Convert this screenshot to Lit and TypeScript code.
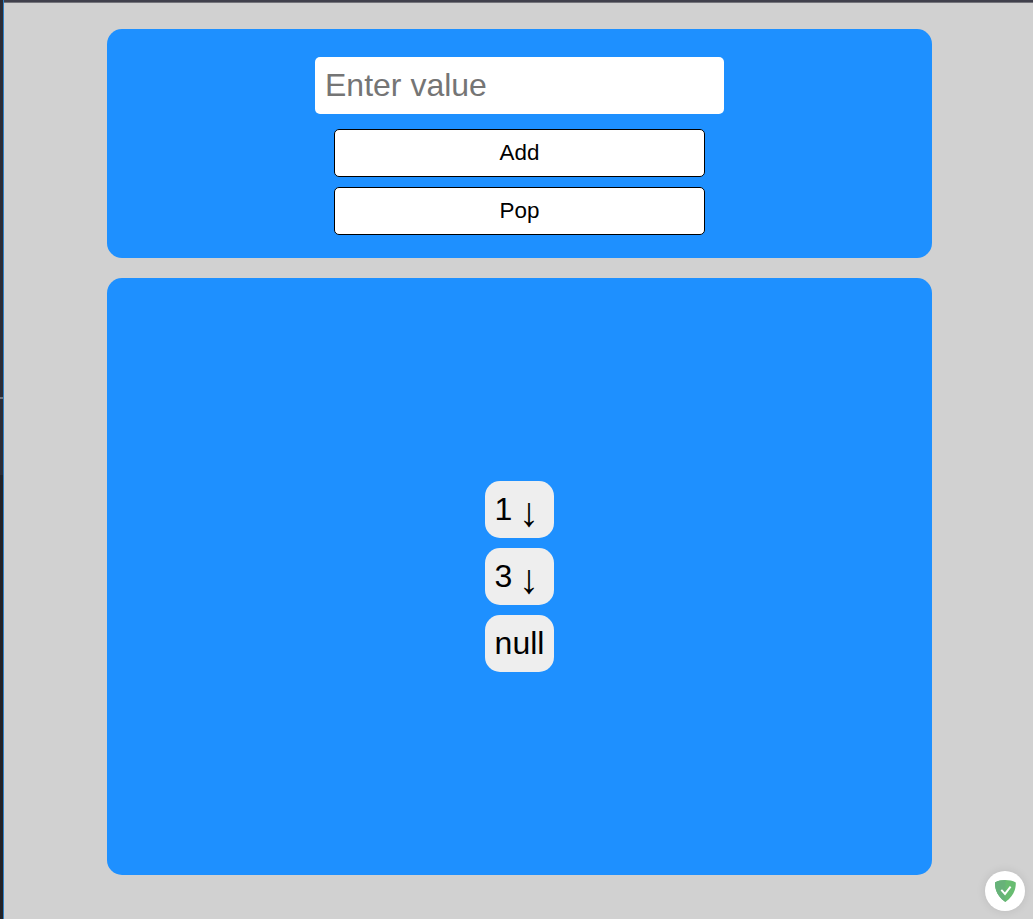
import { LitElement, html, css } from "lit";
import { customElement, state } from "lit/decorators.js";

@customElement("app-root")
export class AppRoot extends LitElement {
  static styles = css`
    :host {
      display: block;
      font-family: "Liberation Sans", Arial, sans-serif;
      color: #000;
    }
    *, *::before { box-sizing: border-box; }
    .window {
      display: grid;
      grid-template-columns: 4px 1fr;
      grid-template-rows: 3px 1fr;
      height: 919px;
      background: #d1d1d1;
      overflow: hidden;
    }
    .top {
      grid-column: 2;
      background: #40404c;
      border-bottom: 1px solid #74747b;
    }
    .side {
      grid-column: 1;
      grid-row: 1 / 3;
      display: flex;
      flex-direction: column;
      background: linear-gradient(#2b2c36 0 475px, #222227 475px);
      border-right: 1px solid #2f7fc4;
      padding-top: 397px;
    }
    .tick { height: 2px; background: #74747b; }
    .page {
      grid-column: 2;
      display: flex;
      flex-direction: column;
      gap: 20px;
      padding: 26px 101px 44px 103px;
    }
    .panel {
      display: flex;
      flex-direction: column;
      align-items: center;
      background: #1e90ff;
      border-radius: 15px;
    }
    .controls { height: 229px; padding-top: 28px; }
    .stack { flex: 1; justify-content: center; }
    .value {
      width: 409px;
      height: 57px;
      margin: 0 0 15px;
      padding: 10px;
      border: 0;
      border-radius: 5px;
      outline: 0;
      background: #fff;
      font: 32px "Liberation Sans", Arial, sans-serif;
    }
    .value::placeholder { color: #757575; opacity: 1; }
    .button {
      width: 371px;
      height: 48px;
      margin: 0 0 10px;
      padding: 0;
      border: 1px solid #000;
      border-radius: 5px;
      background: #fff;
      color: #000;
      font: 22.4px "Liberation Sans", Arial, sans-serif;
    }
    .nodes { display: flex; flex-direction: column; gap: 10px; width: 69px; }
    .node {
      height: 57px;
      padding: 10px 0 10px 9.6px;
      border-radius: 15px;
      background: #eee;
      font-size: 32px;
      line-height: 37px;
      white-space: nowrap;
    }
    .arrow {
      margin-left: -2.5px;
      font-size: 41px;
      line-height: 0;
      vertical-align: -6px;
    }
    .guard {
      position: fixed;
      right: 8px;
      bottom: 8px;
      width: 40px;
      height: 40px;
      display: flex;
      align-items: center;
      justify-content: center;
      border-radius: 50%;
      background: #fff;
      box-shadow: 0 0 10px rgba(0, 0, 0, 0.1);
    }
  `;

  @state() private items: string[] = ["1", "3"];

  private add() {
    const input = this.renderRoot.querySelector("input")!;
    if (!input.value) return;
    this.items = [input.value, ...this.items];
    input.value = "";
  }

  private pop() {
    this.items = this.items.slice(1);
  }

  render() {
    return html`
      <div class="window">
        <div class="side"><div class="tick"></div></div>
        <div class="top"></div>
        <main class="page">
          <section class="panel controls">
            <input class="value" placeholder="Enter value" />
            <button class="button" @click=${this.add}>Add</button>
            <button class="button" @click=${this.pop}>Pop</button>
          </section>
          <section class="panel stack">
            <div class="nodes">
              ${this.items.map((v) => html`<div class="node">${v} <span class="arrow">↓</span></div>`)}
              <div class="node">null</div>
            </div>
          </section>
        </main>
      </div>
      <div class="guard">
        <svg width="22" height="22" viewBox="0 0 22 22">
          <path fill="#68bc71" d="M11.400 0C8 0 4 .800 1 2.400c0 3.400-.100 12 10.400 19.600C21.900 14.400 21.800 5.800 21.800 2.400 18.800.800 14.800 0 11.400 0z" />
          <path fill="#67b279" d="M11.400 0C8 0 4 .800 1 2.400c0 3.400-.100 12 10.400 19.600z" />
          <path fill="none" stroke="#fff" stroke-width="1.900" d="M7.300 9.800l3.700 4.100 5.600-7.200" />
        </svg>
      </div>
    `;
  }
}
